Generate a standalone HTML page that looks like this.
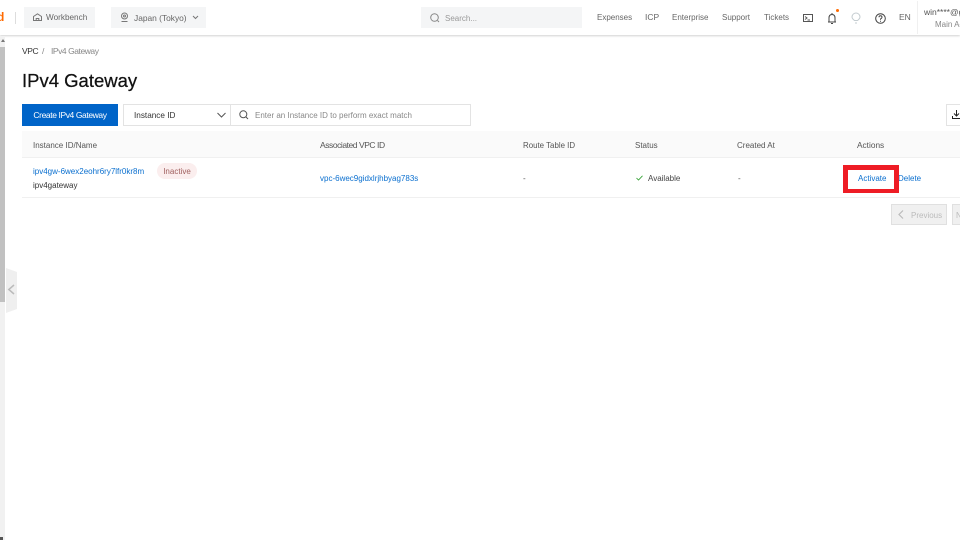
<!DOCTYPE html>
<html><head><meta charset="utf-8">
<style>
html,body{margin:0;padding:0;width:960px;height:540px;overflow:hidden;background:#fff;font-family:"Liberation Sans",sans-serif}
.a{position:absolute;white-space:nowrap;line-height:12px}
.t{font-size:8px;color:#555}
.l{color:#0a6fcf;font-size:8px}
svg{position:absolute;overflow:visible}
</style></head><body>
<!-- top bar -->
<div class="a" style="left:0;top:0;width:960px;height:1px;background:#eee"></div>
<div class="a" style="left:0;top:0;width:960px;height:35px;background:#fff;box-shadow:0 1px 2px rgba(0,0,0,.18)"></div>
<div class="a" style="left:-3px;top:11px;font-size:12px;font-weight:bold;color:#ff6a00">d</div>
<div class="a" style="left:15px;top:12px;width:1px;height:12px;background:#ddd"></div>
<div class="a" style="left:24px;top:7px;width:71px;height:21px;background:#f4f5f6"></div>
<svg style="left:33px;top:13px" width="9" height="8" viewBox="0 0 9 8" fill="none" stroke="#777" stroke-width="1"><path d="M.5 3.500L4.500 .8l4 2.700V7.500h-8zM3.200 7.500V5.500h2.600v2"/></svg>
<div class="a t" style="left:46px;top:12px;color:#666;font-size:8.200px">Workbench</div>
<div class="a" style="left:111px;top:7px;width:95px;height:21px;background:#f4f5f6"></div>
<svg style="left:120px;top:12px" width="9" height="11" viewBox="0 0 9 11" fill="none" stroke="#777" stroke-width="1"><circle cx="4.500" cy="4" r="3"/><circle cx="4.500" cy="4" r="1"/><path d="M1.500 9.500h6"/></svg>
<div class="a t" style="left:134px;top:12px;color:#666;font-size:8.400px">Japan (Tokyo)</div>
<svg style="left:192px;top:15px" width="7" height="5" viewBox="0 0 7 5" fill="none" stroke="#777"><path d="M1 1l2.500 2.500L6 1"/></svg>
<div class="a" style="left:421px;top:7px;width:161px;height:21px;background:#f4f5f6"></div>
<svg style="left:430px;top:13px" width="10" height="10" viewBox="0 0 10 10" fill="none" stroke="#888"><circle cx="4.500" cy="4.500" r="3.800"/><path d="M7.500 7.500L9 9"/></svg>
<div class="a t" style="left:445px;top:13px;color:#999">Search...</div>
<div class="a t" style="left:597px;top:12px;color:#666">Expenses</div>
<div class="a t" style="left:645px;top:11px;color:#666;font-size:8.500px">ICP</div>
<div class="a t" style="left:672px;top:12px;color:#666">Enterprise</div>
<div class="a t" style="left:722px;top:12px;color:#666">Support</div>
<div class="a t" style="left:764px;top:12px;color:#666">Tickets</div>
<svg style="left:803px;top:14px" width="10" height="8" viewBox="0 0 10 8" fill="none" stroke="#555"><rect x=".5" y=".5" width="9" height="7"/><path d="M2 2.500L4 4 2 5.500M4.500 6H7"/></svg>
<svg style="left:827px;top:12px" width="10" height="12" viewBox="0 0 10 12" fill="none" stroke="#444"><path d="M1 10h8M2 10V6q0-3.500 3-3.500T8 6v4M5 1v1.500M4 11.500h2"/></svg>
<div class="a" style="left:836px;top:9px;width:3px;height:3px;border-radius:50%;background:#ff6a00"></div>
<svg style="left:851px;top:12px" width="10" height="12" viewBox="0 0 10 12" fill="none" stroke="#c4ccd0"><path d="M3.500 8.500Q1 6.500 1 5a4 4 0 0 1 8 0q0 1.500-2.500 3.500zM4 11h2"/></svg>
<svg style="left:875px;top:13px" width="11" height="11" viewBox="0 0 11 11" fill="none" stroke="#444"><circle cx="5.500" cy="5.500" r="4.800"/><path d="M4 4.300q0-1.500 1.500-1.500T7 4.200Q7 5 5.500 6v.8M5.500 7.800v1"/></svg>
<div class="a t" style="left:899px;top:11px;color:#666;font-size:8.500px">EN</div>
<div class="a" style="left:917px;top:1px;width:1px;height:33px;background:#f0f0f0"></div>
<div class="a t" style="left:924px;top:6px;color:#555;font-size:8.500px">win****@g</div>
<div class="a t" style="left:935px;top:19px;color:#888">Main Acc</div>
<!-- scrollbar -->
<div class="a" style="left:0;top:36px;width:5px;height:504px;background:#f1f1f1"></div>
<div class="a" style="left:0;top:47px;width:5px;height:255px;background:#c1c1c1"></div>
<div class="a" style="left:1px;top:39px;width:0;height:0;border-left:2px solid transparent;border-right:2px solid transparent;border-bottom:3px solid #777"></div>
<div class="a" style="left:0;top:537px;width:3px;height:3px;background:#555"></div>
<!-- collapse handle -->
<svg style="left:6px;top:268px" width="11" height="45" viewBox="0 0 11 45"><path d="M0 0L11 4V41L0 45z" fill="#efefef"/><path d="M8 17L2.800 21.500 8 26" fill="none" stroke="#bbb" stroke-width="1.500"/></svg>
<!-- breadcrumb & title -->
<div class="a" style="left:22px;top:45px;font-size:8.500px;letter-spacing:-.4px;color:#333">VPC</div>
<div class="a" style="left:42px;top:45px;font-size:8.500px;color:#888">/</div>
<div class="a" style="left:51px;top:45px;font-size:8.500px;letter-spacing:-.45px;color:#888">IPv4 Gateway</div>
<div class="a" style="left:22px;top:69px;font-size:18.500px;line-height:23px;font-weight:500;color:#111;-webkit-text-stroke:.25px #111">IPv4 Gateway</div>
<!-- toolbar -->
<div class="a" style="left:22px;top:104px;width:96px;height:22px;background:#0064c8;color:#fff;font-size:8.500px;letter-spacing:-.4px;line-height:23px;text-align:center">Create IPv4 Gateway</div>
<div class="a" style="left:122.500px;top:104px;width:346px;height:20px;border:1px solid #e3e3e3"></div>
<div class="a" style="left:230px;top:104px;width:1px;height:22px;background:#e3e3e3"></div>
<div class="a t" style="left:134px;top:110px;color:#333;font-size:8.200px">Instance ID</div>
<svg style="left:217px;top:112px" width="9" height="6" viewBox="0 0 9 6" fill="none" stroke="#555"><path d="M.5 1l4 4 4-4"/></svg>
<svg style="left:239px;top:110px" width="10" height="10" viewBox="0 0 10 10" fill="none" stroke="#555"><circle cx="4.300" cy="4.300" r="3.500"/><path d="M7 7l2 2"/></svg>
<div class="a t" style="left:255px;top:110px;color:#888">Enter an Instance ID to perform exact match</div>
<div class="a" style="left:945.500px;top:104px;width:30px;height:20px;border:1px solid #e3e3e3"></div>
<svg style="left:952px;top:110px" width="9" height="9" viewBox="0 0 9 9" fill="none" stroke="#222"><path d="M4.500 0v6M2 3.500l2.500 2.500L7 3.500M.5 6v2.500h8"/></svg>
<!-- table -->
<div class="a" style="left:22px;top:131px;width:938px;height:26px;background:#fafafa;border-bottom:1px solid #f0f0f0"></div>
<div class="a" style="left:22px;top:197px;width:938px;height:1px;background:#f0f0f0"></div>
<div class="a t" style="left:33px;top:140px">Instance ID/Name</div>
<div class="a t" style="left:320px;top:139px;font-size:8.500px;letter-spacing:-.45px">Associated VPC ID</div>
<div class="a t" style="left:523px;top:140px;font-size:7.900px">Route Table ID</div>
<div class="a t" style="left:635px;top:140px">Status</div>
<div class="a t" style="left:737px;top:140px">Created At</div>
<div class="a t" style="left:857px;top:139px;font-size:8.300px">Actions</div>
<div class="a l" style="left:33px;top:166px">ipv4gw-6wex2eohr6ry7lfr0kr8m</div>
<div class="a" style="left:157px;top:163px;width:40px;height:16px;border-radius:8px;background:#fbeeee;color:#a0605f;font-size:8px;line-height:17px;text-align:center">Inactive</div>
<div class="a t" style="left:33px;top:180px;color:#333">ipv4gateway</div>
<div class="a l" style="left:320px;top:173px">vpc-6wec9gidxlrjhbyag783s</div>
<div class="a t" style="left:523px;top:173px">-</div>
<svg style="left:636px;top:175px" width="7" height="6" viewBox="0 0 7 6" fill="none" stroke="#2a9d2a" stroke-width=".8"><path d="M.5 3l2 2L6.500 .8"/></svg>
<div class="a t" style="left:648px;top:173px;color:#444">Available</div>
<div class="a t" style="left:738px;top:173px">-</div>
<div class="a l" style="left:858px;top:173px">Activate</div>
<div class="a l" style="left:898px;top:173px">Delete</div>
<div class="a" style="left:843px;top:165px;width:46px;height:19px;border:solid #ee1c25;border-width:5px 5px 4px 5px"></div>
<!-- pagination -->
<div class="a" style="left:891px;top:204px;width:54px;height:19px;background:#f0f0f0;border:1px solid #e0e0e0"></div>
<svg style="left:898px;top:210px" width="6" height="9" viewBox="0 0 6 9" fill="none" stroke="#bbb" stroke-width="1.200"><path d="M5 .5L1 4.500 5 8.500"/></svg>
<div class="a t" style="left:911px;top:210px;color:#bbb">Previous</div>
<div class="a" style="left:952px;top:204px;width:20px;height:19px;background:#f0f0f0;border:1px solid #e0e0e0"></div>
<div class="a t" style="left:956px;top:210px;color:#bbb">N</div>
</body></html>
